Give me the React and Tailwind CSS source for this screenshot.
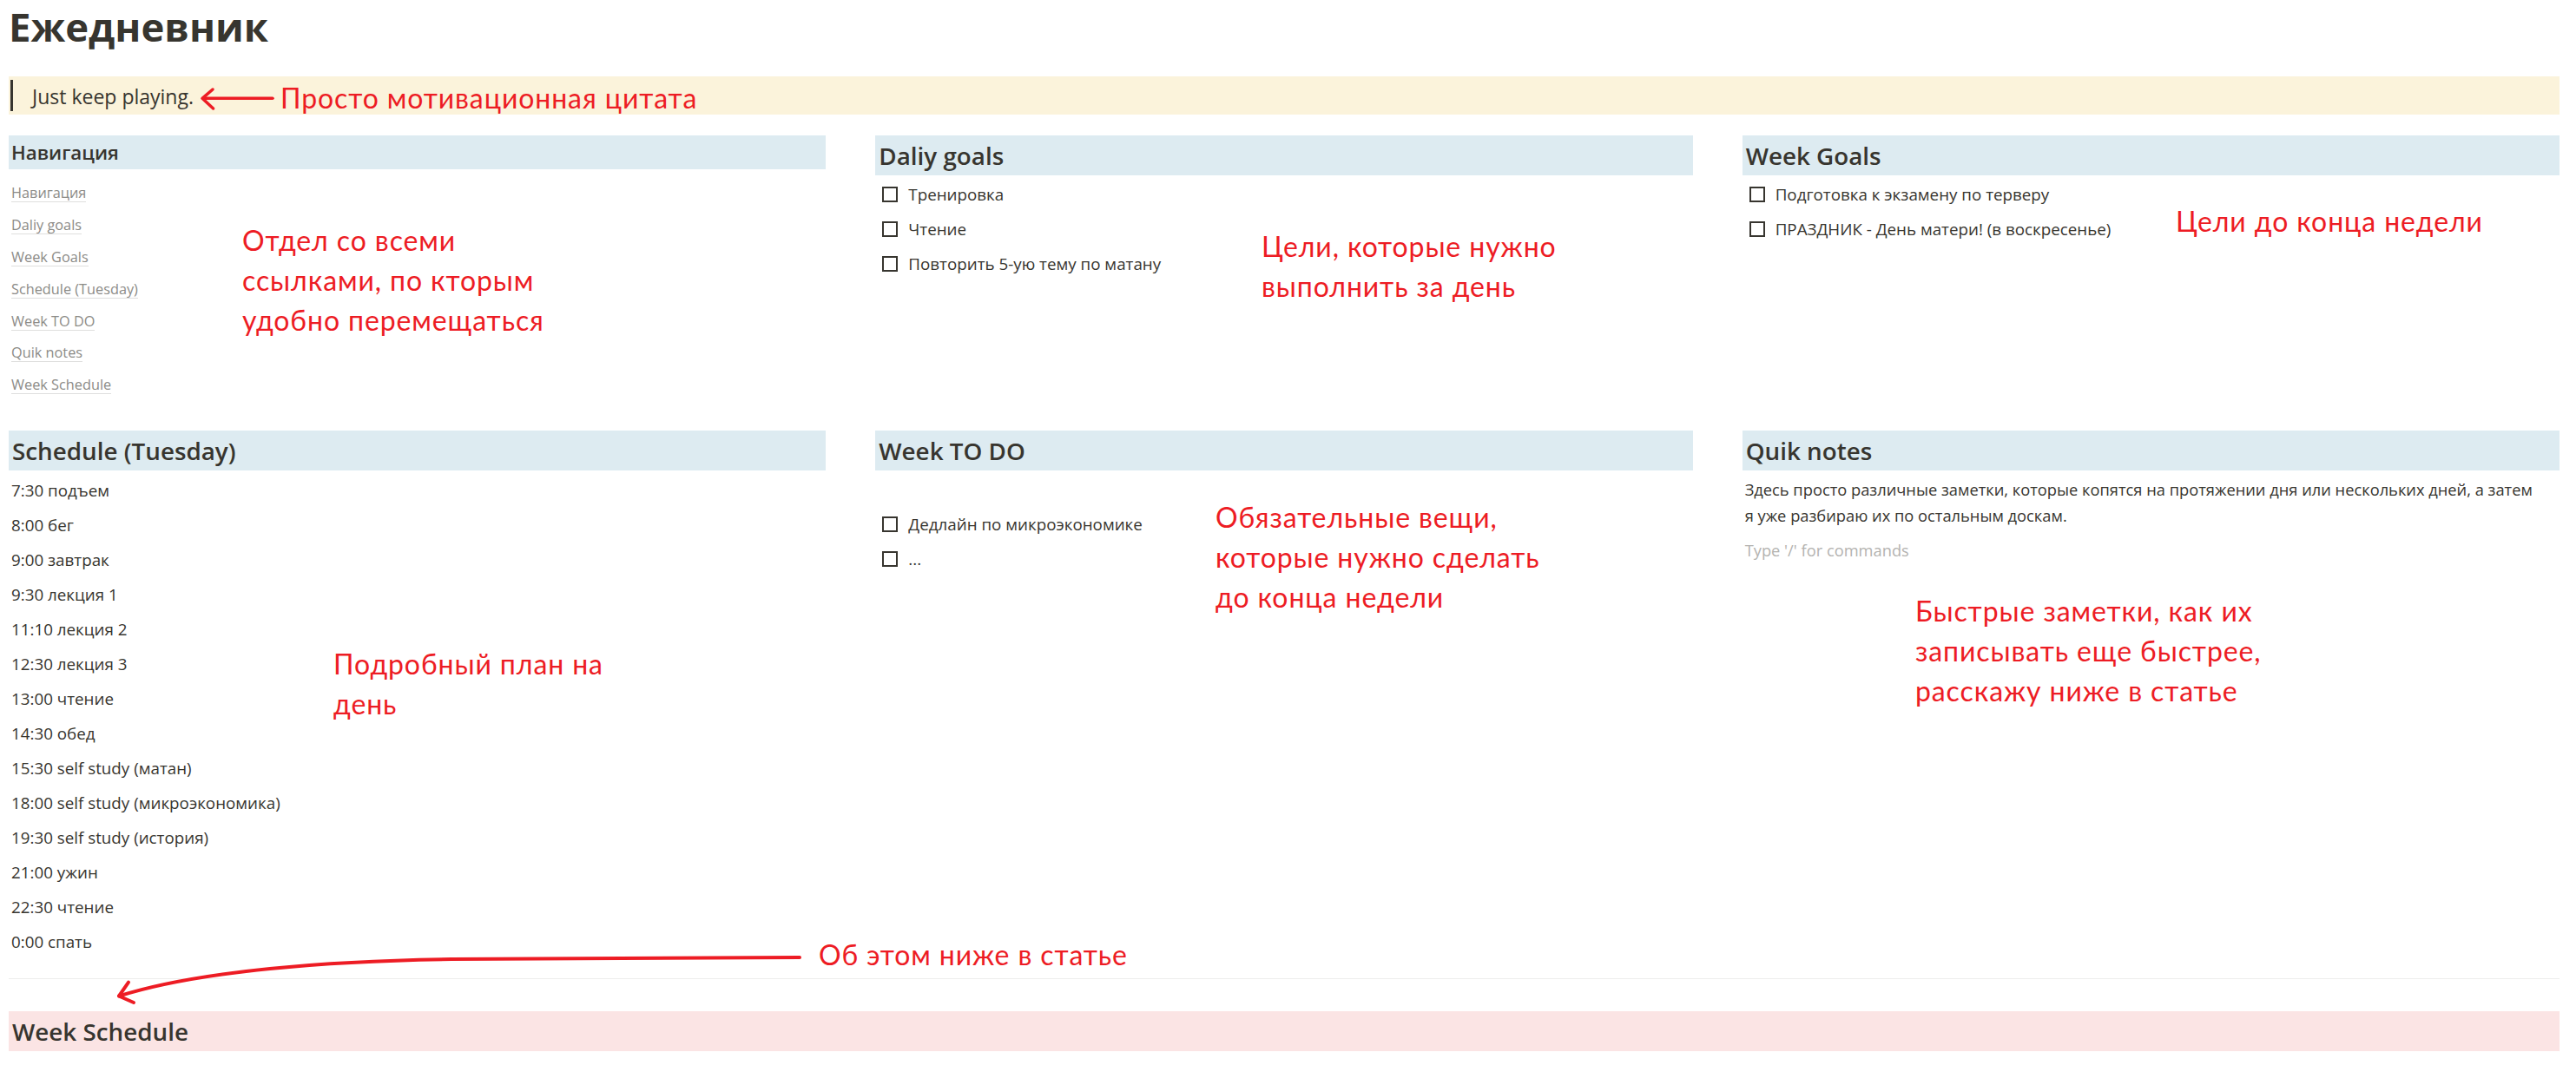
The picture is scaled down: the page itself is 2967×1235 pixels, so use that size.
import React from "react";

const navItems = [
  "Навигация",
  "Daliy goals",
  "Week Goals",
  "Schedule (Tuesday)",
  "Week TO DO",
  "Quik notes",
  "Week Schedule",
];

const schedule = [
  "7:30 подъем",
  "8:00 бег",
  "9:00 завтрак",
  "9:30 лекция 1",
  "11:10 лекция 2",
  "12:30 лекция 3",
  "13:00 чтение",
  "14:30 обед",
  "15:30 self study (матан)",
  "18:00 self study (микроэкономика)",
  "19:30 self study (история)",
  "21:00 ужин",
  "22:30 чтение",
  "0:00 спать",
];

function Checkbox() {
  return <span className="block w-[18px] h-[18px] border-2 border-[#37352f] shrink-0 box-border" />;
}

function Todo({ text }) {
  return (
    <div className="flex items-center h-[40px] pl-[8px]">
      <Checkbox />
      <span className="ml-[12px] text-[18.8px] leading-[40px] whitespace-nowrap">{text}</span>
    </div>
  );
}

function H2({ children, bg = "bg-[#ddebf1]" }) {
  return (
    <div className={`h-[46px] ${bg} pl-[4px] text-[27.8px] leading-[46px] font-semibold whitespace-nowrap`}>
      {children}
    </div>
  );
}

function Note({ className, children }) {
  return (
    <div
      className={`absolute font-['Lato',sans-serif] text-[32px] tracking-[0.9px] leading-[46px] text-[#ed1c24] whitespace-nowrap ${className}`}
    >
      {children}
    </div>
  );
}

export default function App() {
  return (
    <div className="relative min-h-[1235px] w-full bg-white pl-[10px] pr-[19px] font-['Open_Sans','Noto_Sans',sans-serif] text-[#37352f]">
      {/* Title */}
      <h1 className="h-[60px] text-[45.5px] leading-[60px] font-bold whitespace-nowrap">Ежедневник</h1>

      {/* Quote */}
      <div className="mt-[28px] bg-[#fbf3db] py-[4px] pl-[2px]">
        <div className="border-l-[3px] border-[#37352f] pl-[22px] pt-[2px] h-[36px] text-[23px] leading-[34px] whitespace-nowrap">
          Just keep playing.
        </div>
      </div>

      {/* Row 1 */}
      <div className="mt-[24px] grid grid-cols-3 gap-x-[57px]">
        <div>
          <div className="h-[39px] bg-[#ddebf1] pl-[3px] text-[22.3px] leading-[39px] font-semibold">Навигация</div>
          <div className="pt-[10px] pl-[3px]">
            {navItems.map((n) => (
              <div key={n} className="flex items-center h-[36.8px]">
                <span className="text-[16.3px] leading-[19px] text-[#8c8b87] border-b border-[#dfdfde]">{n}</span>
              </div>
            ))}
          </div>
        </div>
        <div>
          <H2>Daliy goals</H2>
          <div className="pt-[2px]">
            <Todo text="Тренировка" />
            <Todo text="Чтение" />
            <Todo text="Повторить 5-ую тему по матану" />
          </div>
        </div>
        <div>
          <H2>Week Goals</H2>
          <div className="pt-[2px]">
            <Todo text="Подготовка к экзамену по терверу" />
            <Todo text="ПРАЗДНИК - День матери! (в воскресенье)" />
          </div>
        </div>
      </div>

      {/* Row 2 */}
      <div className="mt-[33px] grid grid-cols-3 gap-x-[57px]">
        <div>
          <H2>Schedule (Tuesday)</H2>
          <div className="pt-[3px] pl-[3px]">
            {schedule.map((s) => (
              <div key={s} className="h-[40px] text-[18.8px] leading-[40px] whitespace-nowrap">
                {s}
              </div>
            ))}
          </div>
        </div>
        <div>
          <H2>Week TO DO</H2>
          <div className="pt-[2px]">
            <div className="h-[40px]" />
            <Todo text="Дедлайн по микроэкономике" />
            <Todo text="..." />
          </div>
        </div>
        <div>
          <H2>Quik notes</H2>
          <div className="pt-[7px] pl-[3px] text-[18.3px] leading-[30px]">
            <p className="whitespace-nowrap">
              Здесь просто различные заметки, которые копятся на протяжении дня или нескольких дней, а затем
              <br />я уже разбираю их по остальным доскам.
            </p>
            <p className="mt-[10px] text-[#b4b3b0] whitespace-nowrap">Type '/' for commands</p>
          </div>
        </div>
      </div>

      {/* Divider */}
      <div className="mt-[22px] h-px bg-[#ededec]" />

      {/* Week Schedule */}
      <div className="mt-[37px]">
        <H2 bg="bg-[#fbe4e4]">Week Schedule</H2>
      </div>

      {/* Annotations overlay */}
      <svg
        className="absolute left-0 top-0 pointer-events-none"
        width="2967"
        height="1235"
        viewBox="0 0 2967 1235"
        fill="none"
      >
        <g stroke="#ed1c24" strokeLinecap="round" strokeLinejoin="round">
          <path d="M314 113.3 L234 113.3" strokeWidth="3.5" />
          <path d="M245 103 L233 113.3 L245.6 125" strokeWidth="3.5" />
          <path d="M921 1103 L520 1105 C380 1107 230 1118 137 1147.5" strokeWidth="4" />
          <path d="M148 1131.7 L137 1147.5 L154 1155" strokeWidth="4" />
        </g>
      </svg>

      <Note className="left-[323px] top-[90px]">Просто мотивационная цитата</Note>
      <Note className="left-[279px] top-[254px]">
        Отдел со всеми
        <br />
        ссылками, по кторым
        <br />
        удобно перемещаться
      </Note>
      <Note className="left-[1453px] top-[261px]">
        Цели, которые нужно
        <br />
        выполнить за день
      </Note>
      <Note className="left-[2506px] top-[232px]">Цели до конца недели</Note>
      <Note className="left-[384px] top-[742px]">
        Подробный план на
        <br />
        день
      </Note>
      <Note className="left-[1400px] top-[573px]">
        Обязательные вещи,
        <br />
        которые нужно сделать
        <br />
        до конца недели
      </Note>
      <Note className="left-[2206px] top-[681px]">
        Быстрые заметки, как их
        <br />
        записывать еще быстрее,
        <br />
        расскажу ниже в статье
      </Note>
      <Note className="left-[943px] top-[1077px]">Об этом ниже в статье</Note>
    </div>
  );
}
